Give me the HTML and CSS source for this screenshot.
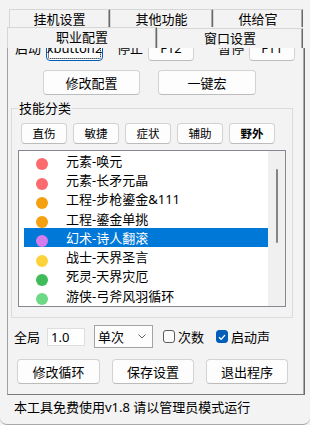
FILE: index.html
```html
<!DOCTYPE html>
<html lang="zh-CN">
<head>
<meta charset="utf-8">
<title>职业配置</title>
<link rel="stylesheet" href="styles.css">
</head>
<body>
<div class="window">
  <div class="tabs tabs-back">
    <div class="tab tab-w1">挂机设置</div>
    <div class="tab tab-w2">其他功能</div>
    <div class="tab tab-w3">供给官</div>
  </div>
  <div class="tabs tabs-front">
    <div class="tab tab-active">职业配置</div>
    <div class="tab tab-window">窗口设置</div>
  </div>
  <div class="panel">
    <div class="hotkeys">
      <span class="lbl lbl-start">启动</span>
      <div class="btn key key-focus">xbutton2</div>
      <span class="lbl lbl-stop">停止</span>
      <div class="btn key key-box">F12</div>
      <span class="lbl lbl-pause">暂停</span>
      <div class="btn key key-box">F11</div>
    </div>
    <div class="actions">
      <div class="btn act-1">修改配置</div>
      <div class="btn act-2">一键宏</div>
    </div>
    <fieldset class="group">
      <legend class="group-title">技能分类</legend>
      <div class="cats">
        <div class="btn cat">直伤</div>
        <div class="btn cat">敏捷</div>
        <div class="btn cat">症状</div>
        <div class="btn cat">辅助</div>
        <div class="btn cat cat-bold">野外</div>
      </div>
      <div class="list">
        <div class="rows">
          <div class="row"><span class="dot dot-red"></span><span class="row-text">元素-唤元</span></div>
          <div class="row"><span class="dot dot-red"></span><span class="row-text">元素-长矛元晶</span></div>
          <div class="row"><span class="dot dot-orange"></span><span class="row-text">工程-步枪鎏金&amp;111</span></div>
          <div class="row"><span class="dot dot-orange"></span><span class="row-text">工程-鎏金单挑</span></div>
          <div class="row row-selected"><span class="dot dot-purple"></span><span class="row-text">幻术-诗人翻滚</span></div>
          <div class="row"><span class="dot dot-yellow"></span><span class="row-text">战士-天界圣言</span></div>
          <div class="row"><span class="dot dot-green"></span><span class="row-text">死灵-天界灾厄</span></div>
          <div class="row"><span class="dot dot-lightgreen"></span><span class="row-text">游侠-弓斧风羽循环</span></div>
        </div>
        <div class="scrollbar"><div class="thumb"></div></div>
      </div>
    </fieldset>
    <div class="controls">
      <span class="lbl lbl-global">全局</span>
      <div class="input">1.0</div>
      <div class="select">
        <span>单次</span>
        <svg class="chev" width="8" height="5" viewBox="0 0 8 5"><polyline points="0.5,0.5 4,4 7.5,0.5" fill="none" stroke="#606060" stroke-width="1"/></svg>
      </div>
      <span class="check"></span>
      <span class="check-label">次数</span>
      <span class="check check-on"><svg width="10" height="10" viewBox="0 0 10 10"><polyline points="2,5.2 4.2,7.3 8,3" fill="none" stroke="#fff" stroke-width="1.2"/></svg></span>
      <span class="check-label">启动声</span>
    </div>
    <div class="buttons">
      <div class="btn bb-1">修改循环</div>
      <div class="btn bb-2">保存设置</div>
      <div class="btn bb-3">退出程序</div>
    </div>
  </div>
  <div class="status">本工具免费使用v1.8 请以管理员模式运行</div>
</div>
</body>
</html>
```

FILE: styles.css
```css
* { box-sizing: border-box; }
html, body { margin: 0; padding: 0; }
body {
  width: 310px;
  height: 425px;
  overflow: hidden;
  background: #f3f3f3;
  font-family: "Noto Sans", "Noto Sans CJK SC", sans-serif;
  font-size: 13px;
  color: #000;
}
.window {
  height: 425px;
  padding-top: 9px;
  border-bottom: 1px solid #a8a8a8;
  border-radius: 0 0 7px 7px;
}

/* tabs */
.tabs { display: flex; }
.tabs-back { margin-left: 9px; height: 18px; }
.tabs-front { margin-left: 7px; height: 21px; align-items: flex-end; }
.tab {
  display: flex;
  align-items: center;
  justify-content: center;
  border-top: 1px solid #d6d6d6;
  border-left: 1px solid #d6d6d6;
  border-right: 1px solid #6a6a6a;
  box-shadow: inset -1px 0 #a9a9a9;
  font-size: 13px;
  line-height: 16px;
  white-space: nowrap;
}
.tabs-back .tab { height: 18px; }
.tab-w1 { width: 101px; }
.tab-w2 { width: 103px; }
.tab-w3 { width: 90px; }
.tab-active { width: 150px; height: 21px; padding-bottom: 2px; }
.tab-window { width: 146px; height: 20px; padding-bottom: 1px; }

/* panel */
.panel {
  margin-left: 7px;
  width: 298px;
  height: 347px;
  border-left: 1px solid #a0a0a0;
  border-right: 1px solid #6a6a6a;
  border-bottom: 1px solid #7a7a7a;
  box-shadow: inset -1px 0 #a9a9a9;
  overflow: hidden;
}

.lbl { width: 26px; white-space: nowrap; line-height: 16px; }

.btn {
  display: flex;
  align-items: center;
  justify-content: center;
  background: #fdfdfd;
  border: 1px solid #d3d3d3;
  border-bottom-color: #bcbcbc;
  border-radius: 4px;
  font-size: 13px;
  line-height: 16px;
  white-space: nowrap;
}

.hotkeys {
  display: flex;
  align-items: center;
  height: 27px;
  margin-top: -14px;
}
.key { height: 27px; }
.lbl-start { margin-left: 7px; }
.key-focus {
  margin-left: 5px;
  width: 57px;
  border-color: #005fb8;
  outline: 1px dotted #000;
  outline-offset: -3px;
}
.lbl-stop { margin-left: 14px; }
.key-box { margin-left: 5px; width: 46px; }
.lbl-pause { margin-left: 24px; }

.actions {
  display: flex;
  gap: 18px;
  margin-top: 9px;
  padding-left: 35px;
  height: 25px;
}
.act-1 { width: 97px; }
.act-2 { width: 98px; }

/* group */
.group {
  margin: 5px 0 0 3px;
  width: 282px;
  padding: 0 6px 10px 6px;
  border: 1px solid #dcdcdc;
  min-width: 0;
}
.group-title {
  padding: 0 1px;
  font-size: 13px;
  line-height: 16px;
}
.cats {
  display: flex;
  gap: 6px;
  margin: 7px 0 0 3px;
}
.cat {
  width: 46px;
  height: 21px;
  font-size: 11.5px;
  line-height: 14px;
}
.cat-bold { font-weight: bold; }

.list {
  display: flex;
  margin-top: 6px;
  width: 268px;
  height: 157px;
  border: 1px solid #85888e;
  background: #fff;
}
.rows {
  flex: 1;
  padding-left: 5px;
}
.row {
  display: flex;
  align-items: center;
  height: 19.3px;
  font-size: 13px;
  line-height: 16px;
  white-space: nowrap;
}
.row-selected { background: #0078d7; color: #fff; }
.dot {
  align-self: flex-end;
  width: 12px;
  height: 12px;
  border-radius: 50%;
  margin-left: 12px;
  flex: none;
}
.row-text { margin-left: 18px; }
.dot-red { background: #fb6b6e; }
.dot-orange { background: #f5a00f; }
.dot-purple { background: #d57ded; }
.dot-yellow { background: #fdd33c; }
.dot-green { background: #3fbb5a; }
.dot-lightgreen { background: #6dd987; }

.scrollbar {
  width: 17px;
  background: #f0f0f0;
  display: flex;
  justify-content: center;
}
.thumb {
  width: 2px;
  height: 74px;
  margin-top: 18px;
  border-radius: 1px;
  background: #858585;
}

/* controls */
.controls {
  display: flex;
  align-items: center;
  height: 23px;
  margin-top: 7px;
}
.lbl-global { margin-left: 6px; }
.input {
  margin-left: 7px;
  width: 38px;
  height: 18px;
  padding-left: 3px;
  background: #fff;
  border: 1px solid #dedede;
  line-height: 16px;
}
.select {
  margin-left: 9px;
  width: 59px;
  height: 23px;
  display: flex;
  align-items: center;
  justify-content: space-between;
  padding: 0 6px 0 3px;
  background: #fdfdfd;
  border: 1px solid #a3a3a3;
  line-height: 16px;
}
.chev { display: block; }
.check {
  margin-left: 10px;
  width: 12px;
  height: 13px;
  border: 1px solid #5c5c5c;
  border-radius: 3px;
  background: #fbfbfb;
  display: flex;
  align-items: center;
  justify-content: center;
}
.check-on {
  margin-left: 12px;
  border-color: #005fb8;
  background: #005fb8;
}
.check-label { margin-left: 3px; line-height: 16px; white-space: nowrap; }

.buttons {
  display: flex;
  gap: 12px;
  margin-top: 11px;
  padding-left: 9px;
  height: 25px;
}
.bb-1 { width: 83px; }
.bb-2 { width: 82px; }
.bb-3 { width: 82px; }

.status {
  margin-top: 4px;
  padding-left: 14px;
  font-size: 13px;
  line-height: 16px;
  white-space: nowrap;
}
```
